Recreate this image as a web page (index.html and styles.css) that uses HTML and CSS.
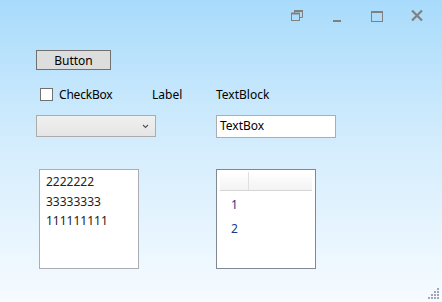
FILE: index.html
```html
<!DOCTYPE html>
<html lang="en">
<head>
  <meta charset="UTF-8" />
  <title>MainWindow</title>
  <link rel="stylesheet" href="styles.css">
</head>
<body>
  <div class="window">
    <!-- TITLE BAR -->
    <div class="titlebar">
      <svg class="cap" viewBox="0 0 14 14" width="14" height="14">
        <path d="M4.5 4 V2.5 H12.5 V8.5 H10" fill="none" stroke="#808080"/>
        <path d="M4 2 H13" stroke="#808080" stroke-width="2"/>
        <rect x="1.5" y="4.5" width="8" height="7" fill="none" stroke="#808080"/>
        <path d="M1 4.5 H10" stroke="#808080" stroke-width="2"/>
      </svg>
      <svg class="cap" viewBox="0 0 14 14" width="14" height="14">
        <rect x="3" y="11" width="8" height="2" fill="#808080"/>
      </svg>
      <svg class="cap" viewBox="0 0 14 14" width="14" height="14">
        <rect x="1.5" y="2.5" width="11" height="10" fill="none" stroke="#808080"/>
        <path d="M1 3 H13" stroke="#808080" stroke-width="2"/>
      </svg>
      <svg class="cap" viewBox="0 0 14 14" width="14" height="14">
        <path d="M2 1.5 L12 11.5 M12 1.5 L2 11.5" stroke="#808080" stroke-width="2.2"/>
      </svg>
    </div>

    <!-- CONTROLS -->
    <div class="content">
      <div class="row row-button">
        <button class="btn">Button</button>
      </div>

      <div class="row row-labels">
        <label class="check"><span class="check-box"></span>CheckBox</label>
        <span class="lbl">Label</span>
        <span class="tblock">TextBlock</span>
      </div>

      <div class="row row-inputs">
        <div class="combo">
          <svg viewBox="0 0 7 5" width="7" height="5"><path d="M1 1 L3.5 3.5 L6 1" fill="none" stroke="#555" stroke-width="1.1"/></svg>
        </div>
        <div class="textbox">TextBox</div>
      </div>

      <div class="row row-lists">
        <ul class="listbox">
          <li>2222222</li>
          <li>33333333</li>
          <li>111111111</li>
        </ul>
        <div class="grid">
          <div class="grid-head">
            <span class="head-cell first"></span>
            <span class="head-cell"></span>
          </div>
          <div class="grid-rows">
            <div class="grid-row">1</div>
            <div class="grid-row">2</div>
          </div>
        </div>
      </div>
    </div>

    <!-- resize grip -->
    <svg class="grip" viewBox="0 0 12 12" width="12" height="12">
      <g fill="#a0a8b8">
        <rect x="9" y="1" width="2" height="2"/>
        <rect x="6" y="4" width="2" height="2"/><rect x="9" y="4" width="2" height="2"/>
        <rect x="3" y="7" width="2" height="2"/><rect x="6" y="7" width="2" height="2"/><rect x="9" y="7" width="2" height="2"/>
        <rect x="0" y="10" width="2" height="2"/><rect x="3" y="10" width="2" height="2"/><rect x="6" y="10" width="2" height="2"/><rect x="9" y="10" width="2" height="2"/>
      </g>
    </svg>
  </div>
</body>
</html>
```

FILE: styles.css
```css
/* base */
html, body { margin: 0; padding: 0; }
body {
  font-family: 'Noto Sans', 'Open Sans', sans-serif;
  font-size: 12px;
  color: #000;
}

.window {
  position: relative;
  width: 442px;
  height: 302px;
  overflow: hidden;
  background: linear-gradient(180deg, #a8dbfb 0%, #d2ecfd 45%, #f6fbff 100%);
}

/* title bar */
.titlebar {
  display: flex;
  justify-content: flex-end;
  gap: 26px;
  padding: 9px 18px 0 0;
  height: 23px;
}
.cap { display: block; }

/* controls area */
.content {
  padding-left: 36px;
}
.row { display: flex; align-items: flex-start; }

.row-button { margin-top: 18px; }
.btn {
  width: 75px;
  height: 20px;
  margin: 0;
  padding: 0;
  background: #dddddd;
  border: 1px solid #707070;
  font: inherit;
  color: #000;
}

.row-labels {
  margin-top: 16px;
  height: 16px;
  align-items: center;
}
.check {
  display: flex;
  align-items: center;
  gap: 6px;
  width: 112px;
  margin-left: 4px;
  letter-spacing: -0.2px;
}
.check-box {
  width: 11px;
  height: 11px;
  background: #fff;
  border: 1px solid #707070;
}
.lbl { width: 64px; }

.row-inputs { margin-top: 13px; }
.combo {
  box-sizing: border-box;
  width: 120px;
  height: 22px;
  border: 1px solid #acacac;
  background: linear-gradient(180deg, #f0f0f0, #e5e5e5);
  display: flex;
  align-items: center;
  justify-content: flex-end;
  padding-right: 6px;
}
.combo svg { display: block; }
.textbox {
  box-sizing: border-box;
  width: 120px;
  height: 23px;
  margin-left: 60px;
  border: 1px solid #abadb3;
  background: #fff;
  padding: 0 0 0 3px;
  line-height: 19px;
}

.row-lists { margin-top: 32px; }
.listbox {
  box-sizing: border-box;
  width: 100px;
  height: 100px;
  margin: -1px 0 0 3px;
  padding: 2px 0 0 6px;
  list-style: none;
  background: #fff;
  border: 1px solid #abadb3;
  color: #222;
}
.listbox li { line-height: 19.5px; }

.grid {
  box-sizing: border-box;
  width: 100px;
  height: 100px;
  margin-left: 77px;
  margin-top: -1px;
  border: 1px solid #828790;
  background: #fff;
  padding: 2px 3px 0 3px;
}
.grid-head {
  display: flex;
  height: 18px;
  border-bottom: 1px solid #d5d5d5;
  background: linear-gradient(180deg, #ffffff, #f3f3f3);
}
.head-cell { flex: 1; }
.head-cell.first {
  flex: 0 0 28px;
  border-right: 1px solid #e0e0e0;
}
.grid-rows { padding-top: 2px; }
.grid-row {
  height: 24px;
  line-height: 24px;
  padding-left: 11px;
  color: #1c3a8c;
}

/* bottom-right grip (overlays window corner) */
.grip {
  position: absolute;
  right: 2px;
  bottom: 3px;
}
```
